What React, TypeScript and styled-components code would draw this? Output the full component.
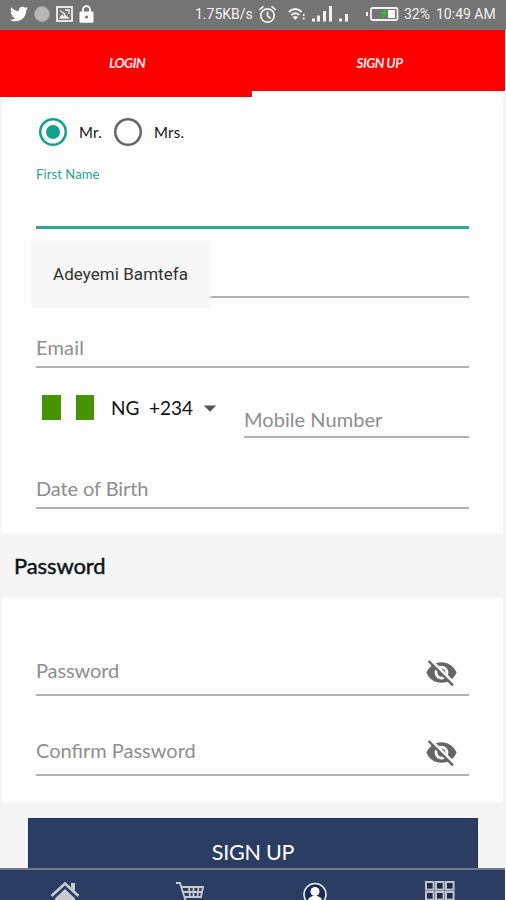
import React from "react";
import styled, { createGlobalStyle, css } from "styled-components";
import { MdArrowDropDown, MdVisibilityOff } from "react-icons/md";
import { FaTwitter } from "react-icons/fa";

const GlobalStyle = createGlobalStyle`
  * { box-sizing: border-box; }
  body { margin: 0; background: #f5f5f5; }
  button { font: inherit; border: 0; padding: 0; background: none; }
`;

const Screen = styled.div`
  width: 506px;
  height: 900px;
  overflow: hidden;
  display: flex;
  flex-direction: column;
  background: #f5f5f5;
  font-family: Lato, "Open Sans", sans-serif;
  white-space: nowrap;
`;

const StatusBar = styled.header`
  flex: none;
  height: 30px;
  display: flex;
  justify-content: space-between;
  background: #747474;
  color: #f2f2f2;
  font: 14px/28px Roboto, sans-serif;
  svg { display: block; flex: none; }
`;

const StatusGroup = styled.div<{ $gap?: number }>`
  display: flex;
  align-items: center;
  gap: ${(p) => p.$gap ?? 0}px;
  height: 28px;
`;

const StatusLeft = styled(StatusGroup)`
  padding-left: 10px;
`;

const StatusSlot = styled.span<{ $width: number }>`
  display: block;
  flex: none;
  width: ${(p) => p.$width}px;
`;

const Tabs = styled.nav`
  flex: none;
  height: 67px;
  width: 505px;
  display: flex;
  background: #fe0000;
`;

const Tab = styled.button<{ $active?: boolean }>`
  width: ${(p) => (p.$active ? 253 : 252)}px;
  height: 67px;
  border-bottom: 6px solid ${(p) => (p.$active ? "#fff" : "transparent")};
  box-shadow: ${(p) => (p.$active ? "0 1px 0 #eeeeee" : "none")};
  padding: 6px 0 0 2px;
  color: #ffe9e9;
  font-size: 13.5px;
  font-weight: 700;
  font-style: italic;
  letter-spacing: -0.55px;
  line-height: 55px;
  text-align: center;
`;

const Card = styled.section<{ $bottom: number }>`
  flex: none;
  margin: 0 3px 0 2px;
  padding: 0 34px ${(p) => p.$bottom}px;
  background: #fdfdfd;
`;

const RadioRow = styled.div`
  height: 70px;
  padding-left: 3px;
  display: flex;
  align-items: center;
  gap: 12px;
`;

const RadioOption = styled.label<{ $width: number }>`
  width: ${(p) => p.$width}px;
  display: flex;
  align-items: center;
  gap: 12px;
  color: #151515;
  font-size: 15px;
  letter-spacing: 0.3px;
`;

const RadioDot = styled.span<{ $checked?: boolean }>`
  width: 28px;
  height: 28px;
  flex: none;
  border-radius: 50%;
  box-shadow: inset 0 0 0 2.5px ${(p) => (p.$checked ? "#12a18a" : "#646464")};
  display: grid;
  place-items: center;
  &::after {
    content: "";
    width: 14px;
    height: 14px;
    border-radius: 50%;
    background: ${(p) => (p.$checked ? "#12a18a" : "transparent")};
  }
`;

const Field = styled.div<{ $height: number; $gap?: number; $focused?: boolean }>`
  position: relative;
  height: ${(p) => p.$height}px;
  display: flex;
  align-items: flex-end;
  justify-content: space-between;
  padding-bottom: ${(p) => p.$gap ?? 7}px;
  border-bottom: 2px solid #b2b2b2;
  color: #8e8e8e;
  font-size: 20px;
  line-height: 24px;
  ${(p) =>
    p.$focused &&
    css`
      border-bottom: 3px solid #2ba690;
      align-items: flex-start;
      color: #1da48e;
      font-size: 13px;
      line-height: 14px;
    `}
`;

const Label = styled.span<{ $spacing?: number }>`
  letter-spacing: ${(p) => p.$spacing ?? 0}px;
`;

const EyeButton = styled.button`
  width: 33px;
  height: 33px;
  margin: 0 11px -7px 0;
  color: #666;
  svg { display: block; width: 33px; height: 33px; }
`;

const Suggestion = styled.div`
  position: absolute;
  left: -4px;
  top: 12px;
  width: 178px;
  height: 66px;
  padding-left: 21px;
  background: #f7f7f7;
  box-shadow: 0 0 3px #f7f7f7;
  color: #303030;
  font: 17px/66px Roboto, sans-serif;
  letter-spacing: 0.05px;
`;

const PhoneRow = styled.div`
  display: flex;
  justify-content: space-between;
  height: 70px;
`;

const CountryPicker = styled.button`
  display: flex;
  align-items: center;
  height: 79px;
  padding-left: 6px;
  color: #121212;
  font-size: 19px;
`;

const Flag = styled.span`
  width: 52px;
  height: 25px;
  display: flex;
  justify-content: space-between;
  margin-right: 17px;
  &::before, &::after {
    content: "";
    width: 17.5px;
    background: #489400;
    border-left: 1px solid #279323;
  }
`;

const Code = styled.span<{ $width: number }>`
  width: ${(p) => p.$width}px;
  text-align: left;
`;

const MobileField = styled.div`
  width: 225px;
`;

const SectionTitle = styled.h2`
  flex: none;
  margin: 0;
  height: 64px;
  padding-left: 14px;
  color: #0c1414;
  font-size: 22px;
  font-weight: 400;
  letter-spacing: -0.1px;
  -webkit-text-stroke: 0.45px #0c1414;
  line-height: 64px;
`;

const SubmitButton = styled.button`
  flex: none;
  margin: 16px 0 0 28px;
  width: 450px;
  height: 50px;
  padding-top: 17px;
  background: #2b3d62;
  border: 1px solid #1d3262;
  border-bottom: 0;
  color: #fff;
  font-size: 21.5px;
  letter-spacing: -0.2px;
  line-height: 32px;
`;

const BottomNav = styled.nav`
  flex: none;
  height: 32px;
  width: 505px;
  border-top: 2px solid #737b8a;
  background: #2b3d62;
  display: grid;
  grid-template-columns: repeat(4, 125px);
  justify-content: start;
  padding-left: 2px;
  overflow: hidden;
`;

const NavItem = styled.button`
  display: flex;
  justify-content: center;
  align-items: flex-start;
  height: 46px;
  padding-top: 11px;
`;

const ImageIcon = () => (
  <svg width="17" height="16" viewBox="0 0 17 16" fill="none" stroke="#f2f2f2">
    <rect x="1" y="1" width="15" height="14" strokeWidth="1.8" />
    <path d="M4 4.5q4 2 6 6M9 4h4v4" strokeWidth="1.3" />
    <path d="m3 12.5 3-4 2 2 1.5-1.5 4 3.5z" fill="#f2f2f2" strokeWidth=".3" />
  </svg>
);

const LockIcon = () => (
  <svg width="15" height="18" viewBox="0 0 15 18">
    <path d="M4 8V4.7a3.5 3.5 0 0 1 7 0V8" fill="none" stroke="#fff" strokeWidth="1.8" />
    <rect x=".5" y="6.5" width="14" height="11.2" rx="1.3" fill="#fff" />
    <circle cx="7.5" cy="12" r="1.6" fill="#747474" />
  </svg>
);

const AlarmIcon = () => (
  <svg width="19" height="19" viewBox="0 0 18 19" fill="none" stroke="#f2f2f2" strokeWidth="1.7">
    <circle cx="9" cy="10.5" r="6.7" />
    <path d="M9 6.5v4.3l3 2.5M.8 4.8 5 1.3M17.2 4.8 13 1.3" />
  </svg>
);

const WifiIcon = () => (
  <svg width="18" height="14" viewBox="0 0 18 14" fill="none" stroke="#f2f2f2" strokeWidth="1.8">
    <path d="M.8 5q6.5-6 13 0M3.3 8q4-3.5 8 0" />
    <path d="m4.500 10 2.8 3 2.8-3q-2.8-2-5.6 0z" fill="#f2f2f2" stroke="none" />
    <path d="M15.8 7v2M15.8 10.5v2" strokeWidth="1.6" />
  </svg>
);

const SignalIcon = () => (
  <svg width="38" height="18" viewBox="0 0 38 18" fill="#f2f2f2">
    <path d="M0 13.5h3v3H0zM5 10.5h3v6H5zM11 6h3v10.5h-3zM17 1h3v15.5h-3zM27 13.5h3v3h-3zM33 9h3v7.5h-3z" />
  </svg>
);

const BatteryIcon = () => (
  <svg width="33" height="14" viewBox="0 0 33 14">
    <path d="M1 5v4" stroke="#f2f2f2" strokeWidth="2" />
    <rect x="5" y="1" width="26.5" height="12" rx="1.5" fill="none" stroke="#f2f2f2" strokeWidth="1.8" />
    <path d="M22 3h7v8h-7z" fill="#fff" />
    <path d="M18 3 15.500 7H17.500L17 11l2.500-3.500V3z" fill="#1ecb2e" stroke="#1ecb2e" />
  </svg>
);

const HomeIcon = () => (
  <svg width="30" height="27" viewBox="0 0 30 27">
    <path d="M1.5 15 15 2.5 28.5 15" fill="none" stroke="#c8ccd0" strokeWidth="2.7" />
    <path d="M21 2h4v8l-4-3.5z" fill="#c8ccd0" />
    <path d="m5 17.500 10-9.500 10 9.500V27H5z" fill="#c8ccd0" />
  </svg>
);

const CartIcon = () => (
  <svg width="30" height="28" viewBox="0 0 30 28" fill="none" stroke="#c8ccd0" strokeWidth="1.8">
    <path d="M1 2h4l6 19h14M6.5 6H28l-2 10H9.500M8 11h19M14 6l1 10M18.5 6v10M23.5 6l-1 10" />
    <circle cx="13" cy="24" r="2" />
    <circle cx="24" cy="24" r="2" />
  </svg>
);

const UserIcon = () => (
  <svg width="26" height="26" viewBox="0 0 26 26">
    <circle cx="13" cy="13.5" r="11" fill="#172b55" stroke="#e8ebf2" strokeWidth="1.6" />
    <circle cx="13" cy="10.5" r="4.5" fill="#fff" />
    <path d="M5.500 20.500c1-5 5-5.500 7.500-5.500s6.500.500 7.500 5.500q-7.500 6-15 0z" fill="#fff" />
  </svg>
);

const GridIcon = () => (
  <svg width="30" height="30" viewBox="0 0 30 30" fill="#1c2b52" stroke="#c0c4ca" strokeWidth="2">
    {[1, 11, 21].map((y) =>
      [1, 11, 21].map((x) => <rect key={`${x}-${y}`} x={x} y={y} width="7.6" height="7.6" />)
    )}
  </svg>
);

const Bubble = styled.span`
  width: 16px;
  height: 16px;
  border-radius: 50%;
  background: #b8b8b8;
  border: 1px solid #a2a2a2;
`;

const PasswordField = ({ label, height, spacing }: { label: string; height: number; spacing: number }) => (
  <Field $height={height} $gap={12}>
    <Label $spacing={spacing}>{label}</Label>
    <EyeButton aria-label={`Show ${label}`}><MdVisibilityOff /></EyeButton>
  </Field>
);

export default function App() {
  return (
    <Screen>
      <GlobalStyle />
      <StatusBar>
        <StatusLeft $gap={6}>
          <FaTwitter size={18} color="#fff" />
          <Bubble />
          <ImageIcon />
          <LockIcon />
        </StatusLeft>
        <StatusGroup>
          <StatusSlot $width={63}>1.75KB/s</StatusSlot>
          <StatusSlot $width={30}><AlarmIcon /></StatusSlot>
          <StatusSlot $width={24}><WifiIcon /></StatusSlot>
          <StatusSlot $width={54}><SignalIcon /></StatusSlot>
          <StatusSlot $width={38}><BatteryIcon /></StatusSlot>
          <StatusSlot $width={32}>32%</StatusSlot>
          <StatusSlot $width={70}>10:49 AM</StatusSlot>
        </StatusGroup>
      </StatusBar>
      <Tabs>
        <Tab>LOGIN</Tab>
        <Tab $active>SIGN UP</Tab>
      </Tabs>
      <Card $bottom={25}>
        <RadioRow>
          <RadioOption $width={63}><RadioDot $checked />Mr.</RadioOption>
          <RadioOption $width={80}><RadioDot />Mrs.</RadioOption>
        </RadioRow>
        <Field $height={62} $focused><Label $spacing={0.1}>First Name</Label></Field>
        <Field $height={69}>
          <Suggestion>Adeyemi Bamtefa</Suggestion>
        </Field>
        <Field $height={70}><Label $spacing={0.2}>Email</Label></Field>
        <PhoneRow>
          <CountryPicker>
            <Flag />
            <Code $width={38}>NG</Code>
            <Code $width={46}>+234</Code>
            <MdArrowDropDown size={30} color="#555" />
          </CountryPicker>
          <MobileField>
            <Field $height={70} $gap={5}><Label $spacing={0.05}>Mobile Number</Label></Field>
          </MobileField>
        </PhoneRow>
        <Field $height={71}><Label $spacing={-0.1}>Date of Birth</Label></Field>
      </Card>
      <SectionTitle>Password</SectionTitle>
      <Card $bottom={26}>
        <PasswordField label="Password" height={98} spacing={-0.1} />
        <PasswordField label="Confirm Password" height={80} spacing={0} />
      </Card>
      <SubmitButton>SIGN UP</SubmitButton>
      <BottomNav>
        <NavItem aria-label="Home"><HomeIcon /></NavItem>
        <NavItem aria-label="Cart"><CartIcon /></NavItem>
        <NavItem aria-label="Account"><UserIcon /></NavItem>
        <NavItem aria-label="Menu"><GridIcon /></NavItem>
      </BottomNav>
    </Screen>
  );
}
